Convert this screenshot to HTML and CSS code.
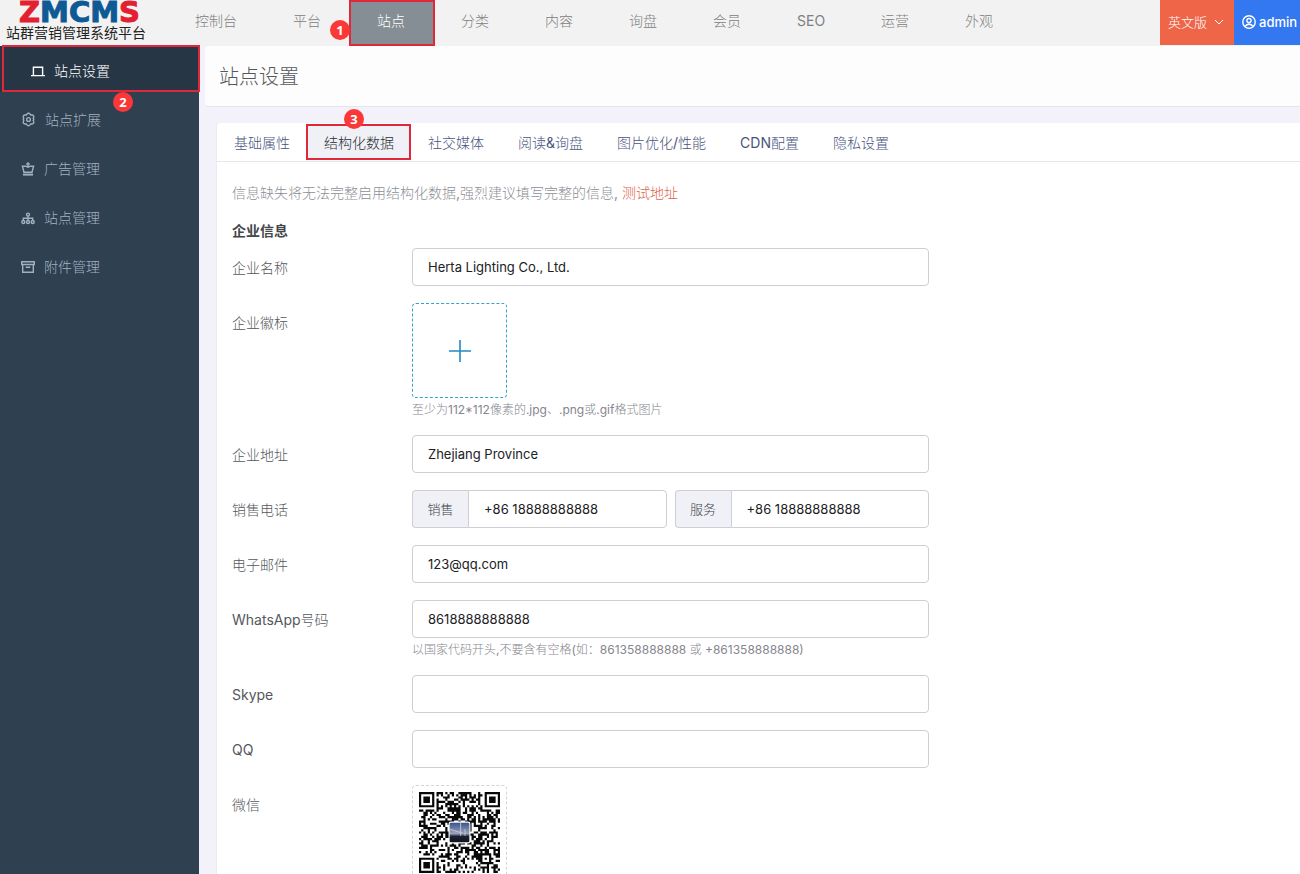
FILE: index.html
```html
<!DOCTYPE html>
<html lang="zh-CN">
<head>
<meta charset="utf-8">
<title>站点设置</title>
<link rel="stylesheet" href="styles.css">
</head>
<body>
<header class="topbar">
  <a class="brand" href="#">
    <span class="brand-name"><span class="brand-red">Z</span>MCM<span class="brand-red">S</span></span>
    <span class="brand-sub">站群营销管理系统平台</span>
  </a>
  <nav class="topnav">
    <a href="#">控制台</a>
    <a href="#">平台</a>
    <a href="#" class="current">站点<span class="step step-one">1</span></a>
    <a href="#">分类</a>
    <a href="#">内容</a>
    <a href="#">询盘</a>
    <a href="#">会员</a>
    <a href="#">SEO</a>
    <a href="#">运营</a>
    <a href="#">外观</a>
  </nav>
  <button class="lang" type="button">英文版
    <svg width="10" height="6" viewBox="0 0 10 6"><path d="M1 1l4 4 4-4" fill="none" stroke="currentColor"/></svg>
  </button>
  <button class="user" type="button">
    <svg width="14" height="14" viewBox="0 0 14 14" fill="none" stroke="currentColor" stroke-width="1.4"><circle cx="7" cy="7" r="6.2"/><circle cx="7" cy="5.6" r="2.1"/><path d="M3.2 11.4C4.2 9.7 5.5 9.3 7 9.3s2.8.4 3.8 2.1"/></svg>
    admin
  </button>
</header>
<div class="shell">
  <aside class="sidebar">
    <a href="#" class="side-link current">
      <svg width="14" height="14" viewBox="0 0 14 14" fill="none" stroke="currentColor" stroke-width="1.4"><path d="M2.4 11V3.2h9.2V11M0 11.6h14"/></svg>
      站点设置<span class="step step-two">2</span>
    </a>
    <a href="#" class="side-link">
      <svg width="15" height="15" viewBox="0 0 24 24" fill="none" stroke="currentColor" stroke-width="2.2" stroke-linejoin="round"><path d="M9.500 3.500C10.500 1.500 13.500 1.500 14.500 3.500L15.500 4.800 17.500 4.800C19.800 4.600 21.200 7 20.200 9L19.500 10.500 20.500 12 19.500 13.500 20.200 15C21.200 17 19.800 19.400 17.500 19.200L15.500 19.200 14.500 20.500C13.500 22.500 10.500 22.500 9.500 20.500L8.500 19.200 6.500 19.200C4.200 19.400 2.800 17 3.800 15L4.500 13.500 3.500 12 4.500 10.500 3.800 9C2.800 7 4.200 4.600 6.500 4.800L8.500 4.800z"/><circle cx="12" cy="12" r="3"/></svg>
      站点扩展
    </a>
    <a href="#" class="side-link">
      <svg width="14" height="14" viewBox="0 0 14 14" fill="none" stroke="currentColor" stroke-width="1.4"><path d="M3 10.3 1.4 4.200h3.300l2.300 1 2.300-1h3.300L11 10.300zM7 .300V5M5.200 2h3.600"/><path d="M2 12.600h10" stroke-width="2"/></svg>
      广告管理
    </a>
    <a href="#" class="side-link">
      <svg width="14" height="14" viewBox="0 0 14 14" fill="none" stroke="currentColor" stroke-width="1.4"><circle cx="7" cy="3.600" r="1.500"/><circle cx="2.300" cy="11" r="1.500"/><circle cx="7" cy="11" r="1.500"/><circle cx="11.700" cy="11" r="1.500"/><path d="M7 5.300v4M2.300 9.300V7.300h9.400v2"/></svg>
      站点管理
    </a>
    <a href="#" class="side-link">
      <svg width="14" height="14" viewBox="0 0 14 14" fill="none" stroke="currentColor" stroke-width="1.4"><path d="M.7 1.700h12.600v2.800H.700zM1.700 4.500v7.800h10.600V4.500M4.700 7.300h4.600"/></svg>
      附件管理
    </a>
  </aside>
  <main class="main">
    <div class="page-head"><h1>站点设置</h1></div>
    <section class="card">
      <nav class="tabs">
        <button type="button">基础属性</button>
        <button type="button" class="current">结构化数据<span class="step step-three">3</span></button>
        <button type="button">社交媒体</button>
        <button type="button">阅读&amp;询盘</button>
        <button type="button">图片优化/性能</button>
        <button type="button">CDN配置</button>
        <button type="button">隐私设置</button>
      </nav>
      <form class="form">
        <p class="notice">信息缺失将无法完整启用结构化数据,强烈建议填写完整的信息, <a href="#">测试地址</a></p>
        <h2>企业信息</h2>
        <div class="row">
          <label for="name">企业名称</label>
          <div class="field"><input id="name" type="text" value="Herta Lighting Co., Ltd."></div>
        </div>
        <div class="row">
          <label for="logo">企业徽标</label>
          <div class="field">
            <button id="logo" class="upload" type="button" aria-label="上传">
              <svg width="22" height="22" viewBox="0 0 22 22"><path d="M11 0v22M0 11h22" stroke="currentColor" stroke-width="1.6"/></svg>
            </button>
            <p class="hint">至少为112*112像素的.jpg、.png或.gif格式图片</p>
          </div>
        </div>
        <div class="row">
          <label for="address">企业地址</label>
          <div class="field"><input id="address" type="text" value="Zhejiang Province"></div>
        </div>
        <div class="row">
          <label for="sales">销售电话</label>
          <div class="field pair">
            <div class="group"><label for="sales">销售</label><input id="sales" type="text" value="+86 18888888888"></div>
            <div class="group"><label for="service">服务</label><input id="service" type="text" value="+86 18888888888"></div>
          </div>
        </div>
        <div class="row">
          <label for="email">电子邮件</label>
          <div class="field"><input id="email" type="text" value="123@qq.com"></div>
        </div>
        <div class="row">
          <label for="whatsapp">WhatsApp号码</label>
          <div class="field">
            <input id="whatsapp" type="text" value="8618888888888">
            <p class="hint">以国家代码开头,不要含有空格(如：861358888888 或 +861358888888)</p>
          </div>
        </div>
        <div class="row">
          <label for="skype">Skype</label>
          <div class="field"><input id="skype" type="text"></div>
        </div>
        <div class="row">
          <label for="qq">QQ</label>
          <div class="field"><input id="qq" type="text"></div>
        </div>
        <div class="row">
          <label for="wechat">微信</label>
          <div class="field">
            <button id="wechat" class="upload filled" type="button" aria-label="微信二维码">
              <svg width="81" height="81" viewBox="0 0 37 37">
                <defs><linearGradient id="sky" x2="0" y2="1"><stop offset="0" stop-color="#35558f"/><stop offset=".55" stop-color="#9aa3bd"/><stop offset=".7" stop-color="#1c2230"/><stop offset="1" stop-color="#10131c"/></linearGradient></defs>
                <path id="modules" fill="#080808"/>
                <rect x="13.5" y="13.5" width="10" height="10" rx="1" fill="#fff"/>
                <rect x="14" y="14" width="9" height="9" rx=".6" fill="url(#sky)"/>
                <path d="M14 17l6 1.8M19 14v6M21 17v3" stroke="#d6c7c9" stroke-width=".4"/>
              </svg>
            </button>
          </div>
        </div>
      </form>
    </section>
  </main>
</div>
<script src="qr.js"></script>
</body>
</html>
```
FILE: styles.css
```css
* { box-sizing: border-box; }

body {
  margin: 0;
  height: 100vh;
  display: flex;
  flex-direction: column;
  overflow: hidden;
  background: #f3f2fb;
  color: #55575b;
  font: 400 14px/20px Inter, "Noto Sans CJK SC Light", "Noto Sans CJK SC", sans-serif;
}

a { color: inherit; text-decoration: none; }
h1, h2, p { margin: 0; }
button, input { font: inherit; color: inherit; margin: 0; }
button { border: 0; padding: 0; background: none; }
svg { display: block; flex: none; }

.topbar {
  display: flex;
  flex: none;
  height: 46px;
  background: #f2f2f2;
}

.brand {
  width: 167px;
  padding-left: 6px;
  color: #222;
}
.brand-name {
  display: block;
  padding-left: 13px;
  font: 700 29px/25px "DejaVu Sans", sans-serif;
  color: #0d5a94;
  -webkit-text-stroke: 1px currentColor;
}
.brand-red { color: #e3202f; }
.brand-sub {
  display: block;
  font-family: "Noto Sans CJK SC", sans-serif;
  line-height: 14px;
  white-space: nowrap;
}

.topnav { display: flex; flex: 1; color: #808080; }
.topnav a {
  position: relative;
  padding: 0 28px;
  line-height: 42px;
  white-space: nowrap;
}
.topnav .current { background: #868e95; color: #fff; }

.current::after {
  content: "";
  position: absolute;
  inset: 0 -2px 0 0;
  border: 2px solid #e0283a;
}

.lang, .user {
  display: flex;
  align-items: center;
  height: 45px;
  padding: 0 8px 2px;
  color: #fff;
  font-size: 13px;
}
.lang { width: 74px; justify-content: space-between; background: #ef6548; padding-right: 10px; }
.user { width: 66px; gap: 3px; background: #3377f1; font-weight: 500; }

.step {
  position: absolute;
  width: 20px;
  height: 20px;
  border-radius: 50%;
  background: #fb3838;
  color: #fff;
  font: 700 13px/20px "Open Sans", sans-serif;
  text-align: center;
  z-index: 1;
}
.step-one { left: -19px; top: 20px; }
.step-two { left: 113px; top: 46px; }
.step-three { left: 37px; top: -15px; }

.shell { display: flex; flex: 1; min-height: 0; }

.sidebar { flex: none; width: 199px; background: #2f4050; color: #a3b0c2; }
.side-link {
  position: relative;
  display: flex;
  align-items: center;
  gap: 9px;
  height: 49px;
  padding-left: 21px;
}
.side-link.current {
  height: 46px;
  margin-bottom: 3px;
  padding: 4px 0 0 31px;
  background: #273645;
  color: #fff;
}
.side-link.current::after { inset: -1px -1px 0 2px; }

.main { flex: 1; min-width: 0; padding-left: 6px; }
.page-head {
  padding: 16px 14px 14px;
  background: #fdfdfd;
  border-bottom: 1px solid #e6e5ee;
  border-radius: 4px 0 0 4px;
}
.page-head h1 { font-size: 20px; font-weight: 400; line-height: 30px; }

.card {
  margin: 16px 0 0 11px;
  background: #fff;
  border-left: 1px solid #ebebf2;
  border-radius: 4px 0 0 0;
}
.tabs { display: flex; border-bottom: 1px solid #e6e7ea; color: #48547c; }
.tabs button { position: relative; height: 38px; padding: 2px 17px 0; white-space: nowrap; }
.tabs .current {
  height: 36px;
  margin-top: 1px;
  padding-top: 1px;
  background: #eff1f6;
  color: #2b2d33;
}
.tabs .current::after { inset: 0 0 0 -1px; }

.form { padding: 21px 15px; display: grid; gap: 17px; }
.notice { color: #8d8f96; }
.notice a { color: #dd6549; }
.form h2 {
  margin-bottom: -9px;
  color: #44464a;
  font: 700 14px/20px "Noto Sans CJK SC", sans-serif;
}
.row { display: grid; grid-template-columns: 180px minmax(0, 517px); }
.row > label { line-height: 20px; padding-top: 10px; }

.field input {
  display: block;
  width: 100%;
  height: 38px;
  padding: 0 15px;
  border: 1px solid #cfcfd3;
  border-radius: 4px;
  background: #fff;
  color: #202124;
  font-size: 13px;
}
.hint { margin-top: 4px; font-size: 12px; line-height: 16px; color: #85868e; }

.pair { display: grid; grid-template-columns: 1fr 1fr; gap: 8px; }
.group { display: flex; }
.group label {
  flex: none;
  width: 56px;
  border: 1px solid #cfcfd3;
  border-right: 0;
  border-radius: 4px 0 0 4px;
  background: #eff1f7;
  color: #404146;
  font-size: 13px;
  line-height: 36px;
  text-align: center;
}
.group input { border-radius: 0 4px 4px 0; }

.upload {
  display: grid;
  place-items: center;
  width: 95px;
  height: 95px;
  border: 1px dashed #35a3c8;
  border-radius: 4px;
  color: #2589c4;
}
.upload.filled { border-color: #d4d4d8; }
```
FILE: qr.js
```js
// Fills the 37 x 37 module grid: finder, alignment and timing marks, then data.
const SIZE = 37;
const finders = [[0, 0], [SIZE - 7, 0], [0, SIZE - 7]];
let seed = 20231;

function next() {
  seed = (seed * 1103515245 + 12345) % 2147483648;
  return seed / 2147483648;
}

function isDark(x, y) {
  const data = next() < 0.5;
  for (const [fx, fy] of finders) {
    const d = Math.max(Math.abs(x - fx - 3), Math.abs(y - fy - 3));
    if (d <= 4) return d !== 4 && d !== 2;
  }
  const a = Math.max(Math.abs(x - 30), Math.abs(y - 30));
  if (a <= 2) return a !== 1;
  if (x === 6 || y === 6) return (x + y) % 2 === 0;
  return data;
}

let d = "";
for (let y = 0; y < SIZE; y++) {
  for (let x = 0; x < SIZE; x++) {
    if (isDark(x, y)) d += `M${x} ${y}h1v1h-1z`;
  }
}
document.getElementById("modules").setAttribute("d", d);
```
